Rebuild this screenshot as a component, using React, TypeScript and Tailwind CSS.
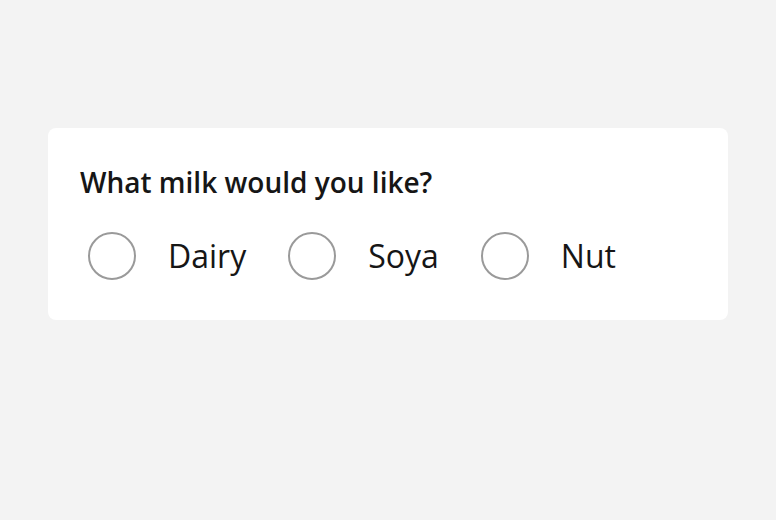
const options = ["Dairy", "Soya", "Nut"];

export default function App() {
  return (
    <div
      className="min-h-[520px] w-full bg-[#f3f3f3] px-12 pt-32"
      style={{ fontFamily: '"Open Sans", sans-serif' }}
    >
      <div className="rounded-lg bg-white px-8 pt-9 pb-10">
        <h2 className="text-[28px] font-semibold leading-[36px] text-[#161616]">
          What milk would you like?
        </h2>
        <div className="mt-8 flex items-center pl-2">
          {options.map((o) => (
            <label key={o} className="mr-[42px] flex items-center gap-8">
              <span className="h-12 w-12 rounded-full border-2 border-[#9a9a9a]" />
              <span className="text-[32px] leading-[48px] text-[#161616]">{o}</span>
            </label>
          ))}
        </div>
      </div>
    </div>
  );
}
